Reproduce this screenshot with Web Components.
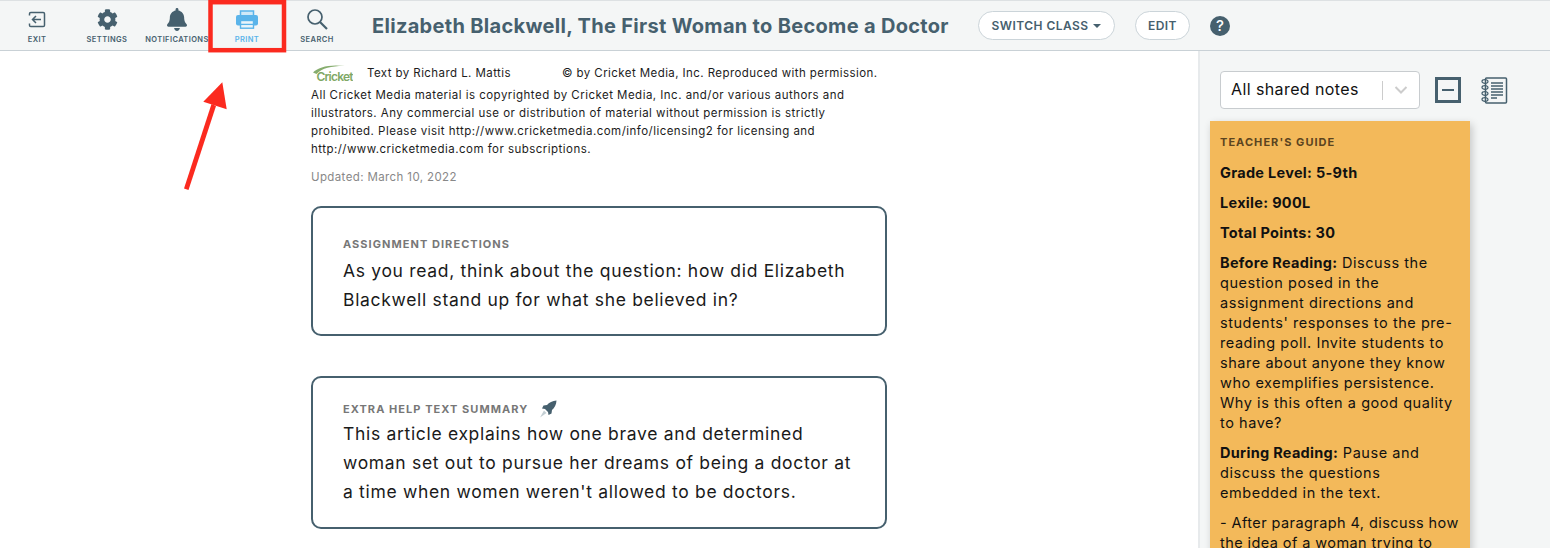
<!DOCTYPE html>
<html>
<head>
<meta charset="utf-8">
<title>Elizabeth Blackwell</title>
<style>
  html, body { margin: 0; padding: 0; height: 548px; overflow: hidden; background: #fff; }
  body { font-family: Inter, "Liberation Sans", sans-serif; color: #111; }
  reader-page { display: block; }
  sticky-note b { letter-spacing: .3px; }
  sticky-note p.tight { letter-spacing: .42px; }
</style>
</head>
<body>
<reader-page>
  <app-toolbar title-text="Elizabeth Blackwell, The First Woman to Become a Doctor">
    <tool-item label="EXIT" icon="exit"></tool-item>
    <tool-item label="SETTINGS" icon="gear"></tool-item>
    <tool-item label="NOTIFICATIONS" icon="bell"></tool-item>
    <tool-item label="PRINT" icon="print" active></tool-item>
    <tool-item label="SEARCH" icon="search"></tool-item>
  </app-toolbar>
  <article-pane>
    <credit-block></credit-block>
    <info-card label="ASSIGNMENT DIRECTIONS">As you read, think about the question: how did Elizabeth Blackwell stand up for what she believed in?</info-card>
    <info-card label="EXTRA HELP TEXT SUMMARY" rocket>This article explains how one brave and determined woman set out to pursue her dreams of being a doctor at a time when women weren't allowed to be doctors.</info-card>
  </article-pane>
  <notes-panel>
    <sticky-note>
      <p><b>Grade Level: 5-9th</b></p>
      <p><b>Lexile: 900L</b></p>
      <p><b>Total Points: 30</b></p>
      <p><b>Before Reading:</b> Discuss the question posed in the assignment directions and students' responses to the pre-reading poll. Invite students to share about anyone they know who exemplifies persistence. Why is this often a good quality to have?</p>
      <p><b>During Reading:</b> Pause and discuss the questions embedded in the text.</p>
      <p class="tight">- After paragraph 4, discuss how the idea of a woman trying to</p>
    </sticky-note>
  </notes-panel>
  <print-callout></print-callout>
</reader-page>

<script>
const ICONS = {
  exit: `<svg width="18" height="17" viewBox="0 0 18 17" fill="none" stroke="currentColor" stroke-width="1.500"><path d="M1.500 4.500V2.800A1.300 1.300 0 0 1 2.800 1.500h12.400a1.300 1.300 0 0 1 1.300 1.300v11.400a1.300 1.300 0 0 1-1.300 1.300H2.800a1.300 1.300 0 0 1-1.300-1.300v-1.700"/><path d="M13 8.500H4.500M8 5L4.500 8.500 8 12"/></svg>`,
  gear: `<svg width="21" height="21" viewBox="0 0 512 512" fill="currentColor"><path d="M487.4 315.7l-42.600-24.600c4.300-23.200 4.300-47 0-70.200l42.600-24.600c4.900-2.800 7.100-8.600 5.500-14-11.100-35.600-30-67.800-54.700-94.600-3.800-4.100-10-5.100-14.800-2.300L380.800 110c-17.900-15.400-38.500-27.300-60.800-35.100V25.800c0-5.600-3.900-10.500-9.400-11.700-36.700-8.200-74.300-7.800-109.200 0-5.500 1.200-9.400 6.100-9.400 11.700V75c-22.200 7.900-42.800 19.800-60.800 35.100L88.700 85.500c-4.900-2.800-11-1.900-14.800 2.300-24.700 26.700-43.600 58.900-54.700 94.600-1.700 5.400.6 11.200 5.500 14L67.300 221c-4.300 23.200-4.300 47 0 70.200l-42.600 24.600c-4.900 2.800-7.100 8.600-5.500 14 11.100 35.600 30 67.800 54.700 94.600 3.800 4.100 10 5.100 14.800 2.300l42.600-24.600c17.900 15.400 38.500 27.300 60.800 35.100v49.200c0 5.600 3.900 10.500 9.400 11.700 36.700 8.200 74.300 7.800 109.200 0 5.500-1.200 9.400-6.100 9.400-11.700v-49.200c22.200-7.900 42.800-19.800 60.800-35.100l42.600 24.600c4.900 2.800 11 1.900 14.800-2.300 24.700-26.700 43.600-58.900 54.700-94.600 1.500-5.500-.7-11.300-5.600-14.100zM256 336c-44.100 0-80-35.900-80-80s35.900-80 80-80 80 35.900 80 80-35.900 80-80 80z"/></svg>`,
  bell: `<svg width="20" height="23" viewBox="0 0 448 512" fill="currentColor"><path d="M224 512c35.320 0 63.970-28.650 63.970-64H160.030c0 35.350 28.650 64 63.970 64zm215.390-149.710c-19.320-20.760-55.470-51.990-55.470-154.290 0-77.700-54.480-139.900-127.940-155.160V32c0-17.670-14.320-32-31.980-32s-31.980 14.330-31.980 32v20.840C118.560 68.100 64.080 130.300 64.080 208c0 102.300-36.150 133.530-55.470 154.290-6 6.450-8.660 14.160-8.610 21.710.11 16.400 12.980 32 32.100 32h383.800c19.120 0 32-15.600 32.100-32 .05-7.550-2.610-15.270-8.610-21.710z"/></svg>`,
  print: `<svg width="22" height="19" viewBox="0 0 22 19"><rect x="4.500" y="1" width="13" height="5" fill="#cfe9f8" stroke="currentColor" stroke-width="1.500"/><rect x="0" y="5" width="22" height="10.500" rx="2" fill="currentColor"/><rect x="4.500" y="10.500" width="13" height="7.700" fill="#eaf5fb" stroke="currentColor" stroke-width="1.400"/><path d="M5 14.400h12" stroke="currentColor" stroke-width="1.300"/></svg>`,
  search: `<svg width="22" height="22" viewBox="0 0 22 22" fill="none" stroke="currentColor"><circle cx="9" cy="9" r="7" stroke-width="1.700"/><path d="M14 14l7 7" stroke-width="2.200"/></svg>`
};

class AppToolbar extends HTMLElement {
  connectedCallback() {
    const shadow = this.attachShadow({ mode: "open" });
    shadow.innerHTML = `
      <style>
        :host { display: flex; align-items: stretch; height: 49px; background: #f4f6f6;
          border-top: 1px solid #dde1e3; border-bottom: 1px solid #c9d1d6; box-sizing: content-box; }
        .tools { display: flex; width: 355px; padding-left: 2px; box-sizing: border-box; }
        h1 { margin: 0; align-self: center; font: 700 20px Inter, sans-serif; letter-spacing: .31px; color: #46606e;
          width: 606px; padding-left: 17px; box-sizing: border-box; white-space: nowrap; }
        .btn { align-self: center; height: 29px; box-sizing: border-box; border: 1px solid #cbd4d9; border-radius: 15px;
          background: #fff; color: #46606e; font: 600 12px Inter, sans-serif; letter-spacing: .45px;
          display: flex; align-items: center; justify-content: center; }
        .switch { width: 137px; margin-left: 17px; gap: 5px; }
        .caret { width: 0; height: 0; border: 4px solid transparent; border-top-color: #46606e; border-bottom: 0; }
        .edit { width: 55px; margin-left: 20px; }
        .help { align-self: center; width: 20px; height: 20px; border-radius: 50%; background: #46606e; color: #fff;
          font: 500 15px Inter, sans-serif; display: flex; align-items: center; justify-content: center; margin-left: 20px; }
      </style>
      <div class="tools"><slot></slot></div>
      <h1>${this.getAttribute("title-text")}</h1>
      <div class="btn switch">SWITCH CLASS <span class="caret"></span></div>
      <div class="btn edit">EDIT</div>
      <div class="help">?</div>`;
  }
}

class ToolItem extends HTMLElement {
  connectedCallback() {
    const shadow = this.attachShadow({ mode: "open" });
    shadow.innerHTML = `
      <style>
        :host { display: flex; flex-direction: column; align-items: center; width: 70px; color: #46606e; padding-top: 6px; box-sizing: border-box; }
        :host([active]) { color: #5ab4ea; }
        .icon { height: 24px; display: flex; align-items: center; justify-content: center; }
        .label { font: 600 7.500px Inter, sans-serif; letter-spacing: .4px; margin-top: 4px; white-space: nowrap; }
      </style>
      <div class="icon">${ICONS[this.getAttribute("icon")]}</div>
      <div class="label">${this.getAttribute("label")}</div>`;
  }
}

class ArticlePane extends HTMLElement {
  connectedCallback() {
    const shadow = this.attachShadow({ mode: "open" });
    shadow.innerHTML = `
      <style>
        :host { display: flex; flex-direction: column; width: 576px; margin-left: 311px; padding-top: 12px; gap: 40px; position: relative; }
        ::slotted(credit-block) { margin-bottom: -20px; }
      </style>
      <slot></slot>`;
  }
}

class CreditBlock extends HTMLElement {
  connectedCallback() {
    const shadow = this.attachShadow({ mode: "open" });
    shadow.innerHTML = `
      <style>
        :host { display: block; font: 11.500px/18px Inter, sans-serif; letter-spacing: .47px; color: #1c1c1c; width: 570px; }
        .row { display: flex; align-items: center; height: 20px; margin-bottom: 3px; letter-spacing: .42px; }
        .logo { width: 40px; height: 18px; margin: 0 14px 0 2px; }
        .by { width: 195px; }
        p { margin: 0; }
        .updated { margin-top: 10px; color: #888; letter-spacing: .38px; }
      </style>
      <div class="row">
        <svg class="logo" viewBox="0 0 40 18">
          <path d="M0 8.500C5 3 17 0 32 2 20 1.800 9 3.500 3.500 10z" fill="#86ad6e"/>
          <text x="3.500" y="16.500" font-family="Inter, sans-serif" font-size="12" font-weight="600" fill="#7fa865" letter-spacing="-.8">Cricket</text>
        </svg>
        <span class="by">Text by Richard L. Mattis</span>
        <span>© by Cricket Media, Inc. Reproduced with permission.</span>
      </div>
      <p>All Cricket Media material is copyrighted by Cricket Media, Inc. and/or various authors and illustrators. Any commercial use or distribution of material without permission is strictly prohibited. Please visit http://www.cricketmedia.com/info/licensing2 for licensing and http://www.cricketmedia.com for subscriptions.</p>
      <p class="updated">Updated: March 10, 2022</p>`;
  }
}

class InfoCard extends HTMLElement {
  connectedCallback() {
    const rocket = this.hasAttribute("rocket") ? `<svg width="18" height="18" viewBox="0 0 18 18"><path d="M17.500.5c-4 .2-7.500 2-9.500 4.500L4.500 5.500 3 8.500l3 .5 3 3 .5 3 3-1.500.5-3.500c2.500-2 4.300-5.500 4.500-9.500z" fill="#46606e"/><path d="M5 10.500l2.500 2.500-6.500 4.500z" fill="#c3ced3"/></svg>` : "";
    const shadow = this.attachShadow({ mode: "open" });
    shadow.innerHTML = `
      <style>
        :host { display: block; box-sizing: border-box; border: 2px solid #46606e; border-radius: 10px; padding: 28px 30px 20.500px; background: #fff; }
        :host([rocket]) { padding: 23px 30px 21.500px; }
        .label { display: flex; align-items: center; gap: 11px; height: 16px; font: 700 11px Inter, sans-serif; letter-spacing: 1.050px; color: #777; }
        .body { font: 400 17.500px/29px Inter, sans-serif; letter-spacing: .68px; color: #1a1a1a; padding-top: 3.500px; }
        :host([rocket]) .body { padding-top: 1.500px; }
      </style>
      <div class="label">${this.getAttribute("label")}${rocket}</div>
      <div class="body"><slot></slot></div>`;
  }
}

class NotesPanel extends HTMLElement {
  connectedCallback() {
    const shadow = this.attachShadow({ mode: "open" });
    shadow.innerHTML = `
      <style>
        :host { position: absolute; top: 51px; left: 1198px; width: 352px; height: 497px; box-sizing: border-box;
          background: #f4f6f6; border-left: 2px solid #e7eaec; padding: 20px 0 0 10px; overflow: hidden; display: block; }
        .top { display: flex; align-items: center; height: 38px; margin: 0 0 12px 10px; }
        .select { width: 200px; height: 38px; box-sizing: border-box; border: 1px solid #c8cccf; border-radius: 4px; background: #fff;
          display: flex; align-items: center; font: 400 16px Inter, sans-serif; letter-spacing: .4px; color: #111; padding: 0 0 0 10px; }
        .select span { flex: 1; position: relative; top: -1px; }
        .sep { width: 1px; height: 19px; background: #ccc; }
        .chev { width: 36px; display: flex; justify-content: center; }
        .minus { width: 26px; height: 26px; box-sizing: border-box; border: 3px solid #46606e; margin-left: 15px; display: flex; align-items: center; justify-content: center; }
        .minus i { display: block; width: 12px; height: 2px; background: #46606e; }
        .book { margin-left: 20px; }
      </style>
      <div class="top">
        <div class="select"><span>All shared notes</span><div class="sep"></div>
          <div class="chev"><svg width="14" height="8" viewBox="0 0 14 8" fill="none" stroke="#ccc" stroke-width="2"><path d="M1.500 1l5.500 5.500L12.500 1"/></svg></div></div>
        <div class="minus"><i></i></div>
        <svg class="book" width="27" height="27" viewBox="0 0 27 27" fill="none" stroke="#46606e">
          <rect x="4.500" y="1" width="21" height="25" rx="1" stroke-width="1.500"/>
          <path d="M10 6h12M10 9h12M10 12h12M10 15h12M10 18h12M10 21h6" stroke-width="1.500"/>
          <ellipse cx="4" cy="4.500" rx="3" ry="1.800" stroke-width="1.200"/>
          <ellipse cx="4" cy="10.500" rx="3" ry="1.800" stroke-width="1.200"/>
          <ellipse cx="4" cy="16.500" rx="3" ry="1.800" stroke-width="1.200"/>
          <ellipse cx="4" cy="22.500" rx="3" ry="1.800" stroke-width="1.200"/>
        </svg>
      </div>
      <slot></slot>`;
  }
}

class StickyNote extends HTMLElement {
  connectedCallback() {
    const shadow = this.attachShadow({ mode: "open" });
    shadow.innerHTML = `
      <style>
        :host { display: block; width: 260px; box-sizing: border-box; background: #f3b95a; padding: 14px 8px 0 10px;
          box-shadow: 2px 3px 8px rgba(0,0,0,.2); font: 400 14.500px/20px Inter, sans-serif; letter-spacing: .55px; color: #111; height: 440px; }
        .head { font: 700 11px/14px Inter, sans-serif; letter-spacing: 1.050px; color: #5b4420; margin-bottom: 14px; }
        ::slotted(p) { margin: 0 0 10px; }
      </style>
      <div class="head">TEACHER'S GUIDE</div>
      <slot></slot>`;
  }
}

// red annotation drawn on top of the screenshot
class PrintCallout extends HTMLElement {
  connectedCallback() {
    const shadow = this.attachShadow({ mode: "open" });
    shadow.innerHTML = `
      <style>
        :host { position: absolute; left: 0; top: 0; width: 300px; height: 200px; pointer-events: none; display: block; }
      </style>
      <svg width="300" height="200" viewBox="0 0 300 200">
        <rect x="210.500" y="2.200" width="73.500" height="48" fill="none" stroke="#fb2a1f" stroke-width="4.500"/>
        <path d="M184 188.500L188.500 190 216 106 211.500 104z" fill="#fb2a1f"/>
        <path d="M222.300 82.300L203.300 101.700 226.700 109.300z" fill="#fb2a1f"/>
      </svg>`;
  }
}

class ReaderPage extends HTMLElement {}

customElements.define("app-toolbar", AppToolbar);
customElements.define("tool-item", ToolItem);
customElements.define("article-pane", ArticlePane);
customElements.define("credit-block", CreditBlock);
customElements.define("info-card", InfoCard);
customElements.define("notes-panel", NotesPanel);
customElements.define("sticky-note", StickyNote);
customElements.define("print-callout", PrintCallout);
customElements.define("reader-page", ReaderPage);
</script>
</body>
</html>
